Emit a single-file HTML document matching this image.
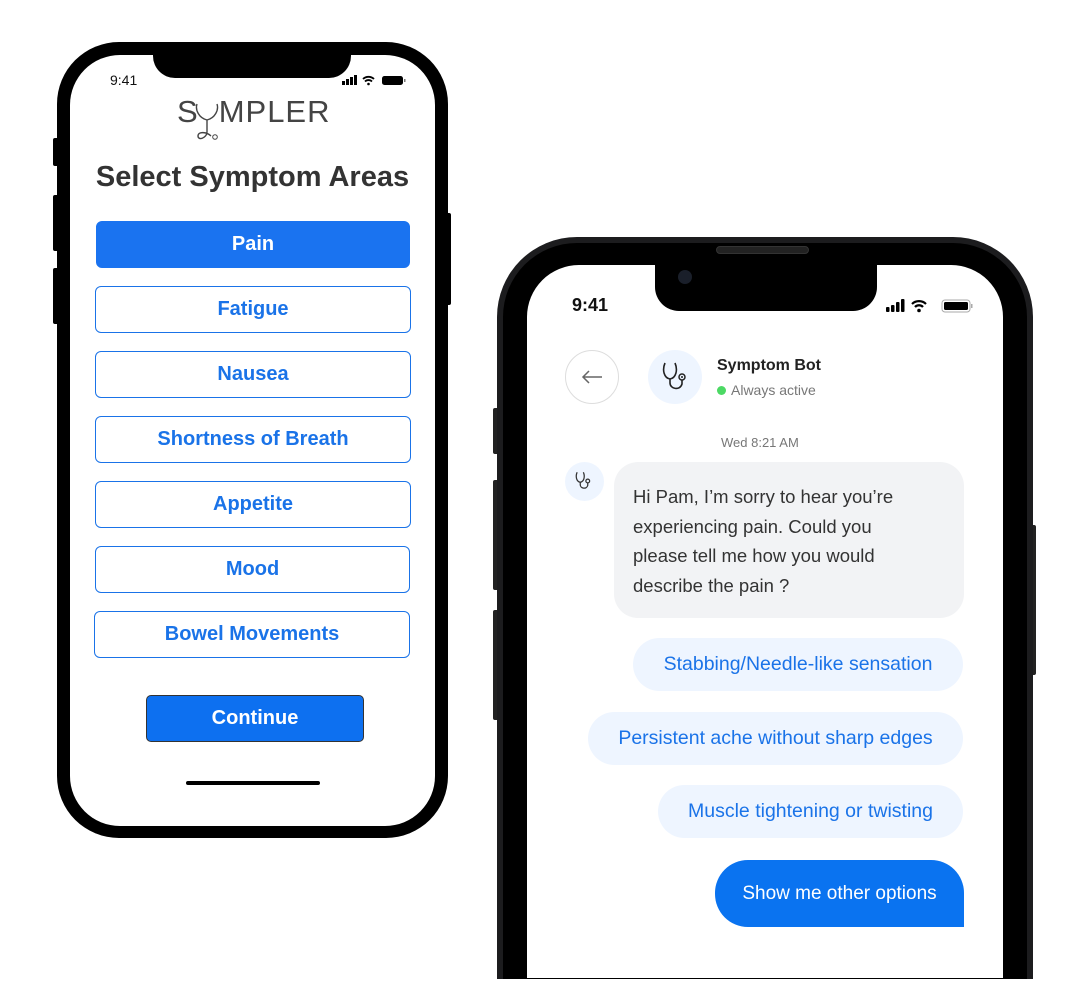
<!DOCTYPE html>
<html style="width:1070px;height:990px;overflow:hidden"><head><meta charset="utf-8"><style>
*{margin:0;padding:0;box-sizing:border-box}
body{width:1070px;height:990px;background:#fff;position:relative;overflow:hidden;font-family:"Liberation Sans",sans-serif}
.a{position:absolute}
.btn{position:absolute;left:95px;width:316px;height:47px;border:1px solid #1a73e8;border-radius:6px;color:#1a73e8;font-weight:bold;font-size:20px;display:flex;align-items:center;justify-content:center;background:#fff}
.chip{position:absolute;height:53px;border-radius:27px;background:#eef5ff;color:#1a73e8;font-size:19.5px;display:flex;align-items:center;justify-content:center;white-space:nowrap}
</style></head><body>
<div class="a" style="left:53px;top:138px;width:6px;height:28px;background:#000;border-radius:2px"></div>
<div class="a" style="left:53px;top:195px;width:6px;height:56px;background:#000;border-radius:2px"></div>
<div class="a" style="left:53px;top:268px;width:6px;height:56px;background:#000;border-radius:2px"></div>
<div class="a" style="left:445px;top:213px;width:6px;height:92px;background:#000;border-radius:2px"></div>
<div class="a" style="left:57px;top:42px;width:391px;height:796px;background:#000;border-radius:62px"></div>
<div class="a" style="left:70px;top:55px;width:365px;height:771px;background:#fff;border-radius:50px"></div>
<div class="a" style="left:153px;top:42px;width:198px;height:36px;background:#000;border-radius:0 0 22px 22px"></div>
<div class="a" style="left:110px;top:72px;font-size:14px;color:#111">9:41</div>
<svg class="a" style="left:342px;top:74px" width="66" height="12" viewBox="0 0 66 12"><rect x="0" y="7" width="3" height="4" fill="#000"/><rect x="4" y="5" width="3" height="6" fill="#000"/><rect x="8" y="3" width="3" height="8" fill="#000"/><rect x="12" y="1" width="3" height="10" fill="#000"/><path d="M21 5a8 8 0 0 1 11 0M23 7.5a5 5 0 0 1 7 0" stroke="#000" stroke-width="1.8" fill="none"/><circle cx="26.5" cy="10" r="1.3" fill="#000"/><rect x="40" y="2" width="21" height="9" rx="2.5" fill="#000"/><rect x="62" y="5" width="1.5" height="3" fill="#777"/></svg>
<div class="a" style="left:177px;top:94px;font-size:31px;color:#444;letter-spacing:1px;font-weight:300">S<span style="display:inline-block;width:20px"></span>MPLER</div>
<svg class="a" style="left:193px;top:100px" width="32" height="46" viewBox="0 0 32 46"><path d="M4 4c-2 6 2 14 10 16c8-2 12-10 10-16M14 20v12c0 6-9 9-9 4s9-4 13 0" stroke="#444" stroke-width="1.4" fill="none"/><circle cx="22" cy="37" r="2.3" stroke="#444" fill="none"/></svg>
<div class="a" style="left:70px;width:365px;top:161px;text-align:center;font-size:29px;font-weight:bold;color:#333">Select Symptom Areas</div>
<div class="btn" style="top:221px;background:#1a73f0;border-color:#1a73f0;color:#fff;left:96px;width:314px">Pain</div>
<div class="btn" style="top:286px">Fatigue</div>
<div class="btn" style="top:351px">Nausea</div>
<div class="btn" style="top:416px">Shortness of Breath</div>
<div class="btn" style="top:481px">Appetite</div>
<div class="btn" style="top:546px;width:315px">Mood</div>
<div class="btn" style="top:611px;left:94px;width:316px">Bowel Movements</div>
<div class="a" style="left:146px;top:695px;width:218px;height:47px;background:#0d70f0;border:1px solid #333;border-radius:5px;color:#fff;font-weight:bold;font-size:20px;display:flex;align-items:center;justify-content:center">Continue</div>
<div class="a" style="left:186px;top:781px;width:134px;height:4px;background:#000;border-radius:2px"></div>
<div class="a" style="left:493px;top:408px;width:6px;height:46px;background:#222;border-radius:2px"></div>
<div class="a" style="left:493px;top:480px;width:6px;height:110px;background:#222;border-radius:2px"></div>
<div class="a" style="left:493px;top:610px;width:6px;height:110px;background:#222;border-radius:2px"></div>
<div class="a" style="left:1030px;top:525px;width:6px;height:150px;background:#222;border-radius:2px"></div>
<div class="a" style="left:497px;top:237px;width:536px;height:742px;background:#1c1c1e;border-radius:80px 80px 0 0"></div>
<div class="a" style="left:503px;top:243px;width:524px;height:736px;background:#000;border-radius:74px 74px 0 0"></div>
<div class="a" style="left:527px;top:265px;width:476px;height:713px;background:#fff;border-radius:52px 52px 0 0"></div>
<div class="a" style="left:655px;top:263px;width:222px;height:48px;background:#000;border-radius:0 0 24px 24px"></div>
<div class="a" style="left:716px;top:246px;width:93px;height:8px;background:#222;border-radius:4px;border:1px solid #333"></div>
<div class="a" style="left:678px;top:270px;width:14px;height:14px;background:#1a1f2a;border-radius:50%"></div>
<div class="a" style="left:572px;top:295px;font-size:18px;font-weight:bold;color:#111">9:41</div>
<svg class="a" style="left:886px;top:298px" width="90" height="16" viewBox="0 0 90 16"><rect x="0" y="9" width="3.5" height="5" rx="1" fill="#000"/><rect x="5" y="7" width="3.5" height="7" rx="1" fill="#000"/><rect x="10" y="4" width="3.5" height="10" rx="1" fill="#000"/><rect x="15" y="1" width="3.5" height="13" rx="1" fill="#000"/><path d="M26 6a10 10 0 0 1 14 0M29 9a5.5 5.5 0 0 1 8 0" stroke="#000" stroke-width="2.2" fill="none"/><circle cx="33" cy="12.5" r="1.8" fill="#000"/><rect x="56" y="2" width="28" height="12" rx="3" fill="none" stroke="#aaa"/><rect x="58" y="4" width="24" height="8" rx="1.5" fill="#000"/><rect x="85" y="6" width="1.5" height="4" fill="#aaa"/></svg>
<div class="a" style="left:565px;top:350px;width:54px;height:54px;border:1px solid #ddd;border-radius:50%"></div>
<svg class="a" style="left:580px;top:368px" width="24" height="18" viewBox="0 0 24 18"><path d="M22 9H3M9 3L3 9l6 6" stroke="#666" stroke-width="1.5" fill="none"/></svg>
<div class="a" style="left:648px;top:350px;width:54px;height:54px;background:#eef5ff;border-radius:50%"></div>
<svg class="a" style="left:660px;top:360px" width="32" height="34" viewBox="0 0 32 34"><path d="M5 3C2 10 4 18 10 19c6-1 8-9 5-16M10 19v4c0 6 10 8 12 1v-4" stroke="#222" stroke-width="1.6" fill="none"/><circle cx="22" cy="17" r="3" stroke="#222" stroke-width="1.5" fill="none"/><circle cx="22" cy="17" r="1" fill="#222"/></svg>
<div class="a" style="left:717px;top:357px;font-size:16px;font-weight:bold;color:#222">Symptom Bot</div>
<div class="a" style="left:717px;top:386px;width:9px;height:9px;background:#4cd964;border-radius:50%"></div>
<div class="a" style="left:731px;top:382px;font-size:14px;color:#777">Always active</div>
<div class="a" style="left:721px;top:435px;font-size:13px;color:#777">Wed 8:21 AM</div>
<div class="a" style="left:565px;top:462px;width:39px;height:39px;background:#eef5ff;border-radius:50%"></div>
<svg class="a" style="left:574px;top:470px" width="20" height="22" viewBox="0 0 32 34"><path d="M5 3C2 10 4 18 10 19c6-1 8-9 5-16M10 19v4c0 6 10 8 12 1v-4" stroke="#333" stroke-width="2" fill="none"/><circle cx="22" cy="17" r="3" stroke="#333" stroke-width="2" fill="none"/></svg>
<div class="a" style="left:614px;top:462px;width:350px;height:156px;background:#f2f3f5;border-radius:24px;padding:20px 40px 20px 19px;font-size:18.5px;line-height:29.5px;color:#333">Hi Pam, I’m sorry to hear you’re experiencing pain. Could you please tell me how you would describe the pain ?</div>
<div class="chip" style="top:638px;left:633px;width:330px">Stabbing/Needle-like sensation</div>
<div class="chip" style="top:712px;left:588px;width:375px">Persistent ache without sharp edges</div>
<div class="chip" style="top:785px;left:658px;width:305px">Muscle tightening or twisting</div>
<div class="a" style="left:715px;top:860px;width:249px;height:67px;background:#0a73f0;border-radius:33px 33px 0 33px;color:#fff;font-size:19px;display:flex;align-items:center;justify-content:center">Show me other options</div>
</body></html>
